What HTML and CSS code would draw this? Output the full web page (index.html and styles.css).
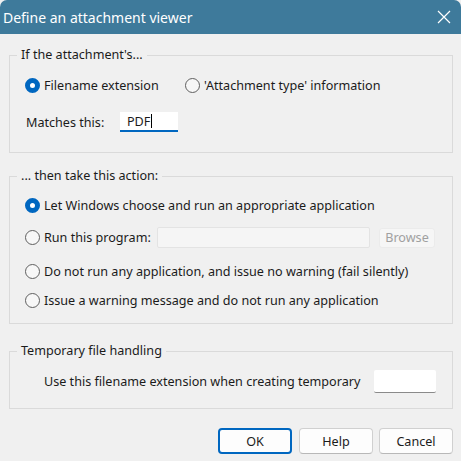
FILE: index.html
```html
<!DOCTYPE html>
<html>
<head>
<meta charset="utf-8">
<link rel="stylesheet" href="styles.css">
</head>
<body>
<div class="window">
  <div class="titlebar">
    <span class="title">Define an attachment viewer</span>
    <svg class="close" width="14" height="14" viewBox="0 0 14 14"><path d="M1 1 L13 13 M13 1 L1 13" stroke="#fff" stroke-width="1.2" fill="none"/></svg>
  </div>
  <div class="content">
    <fieldset class="group g1">
      <legend>If the attachment's...</legend>
      <div class="row r-type">
        <label class="opt w160"><span class="radio on"></span>Filename extension</label>
        <label class="opt"><span class="radio"></span>'Attachment type' information</label>
      </div>
      <div class="row r-match">
        <span class="lbl-match">Matches this:</span>
        <span class="edit edit-pdf">PDF<span class="caret"></span></span>
      </div>
    </fieldset>

    <fieldset class="group g2">
      <legend>... then take this action:</legend>
      <label class="opt a1"><span class="radio on"></span>Let Windows choose and run an appropriate application</label>
      <div class="row a2">
        <label class="opt w132"><span class="radio"></span>Run this program:</label>
        <span class="edit edit-prog"></span>
        <span class="btn-browse">Browse</span>
      </div>
      <label class="opt a3"><span class="radio"></span>Do not run any application, and issue no warning (fail silently)</label>
      <label class="opt a4"><span class="radio"></span>Issue a warning message and do not run any application</label>
    </fieldset>

    <fieldset class="group g3">
      <legend>Temporary file handling</legend>
      <div class="row t1">
        <span class="lbl-temp">Use this filename extension when creating temporary</span>
        <span class="edit edit-temp"></span>
      </div>
    </fieldset>

    <div class="buttons">
      <span class="btn default">OK</span>
      <span class="btn">Help</span>
      <span class="btn">Cancel</span>
    </div>
  </div>
</div>
</body>
</html>
```

FILE: styles.css
```css
html, body {
  margin: 0;
  padding: 0;
  background: #f0f0f0;
}
body {
  font-family: "Noto Sans", "Open Sans", sans-serif;
  font-size: 12.6px;
  color: #1b1b1b;
}
.window {
  width: 461px;
  height: 461px;
  background: #f0f0f0;
  overflow: hidden;
}
.titlebar {
  height: 34px;
  background: #3e7a9b;
  border-radius: 7px 7px 0 0;
  display: flex;
  align-items: center;
  justify-content: space-between;
  padding: 0 10px 0 3px;
  color: #fff;
}
.title {
  font-size: 14px;
  margin-top: 1px;
}
.close { display: block; }
.content {
  padding: 13px 8px 0 9px;
  display: flex;
  flex-direction: column;
}
.group {
  margin: 0;
  border: 1px solid #dadada;
  padding: 0 15px;
  min-width: 0;
}
.group legend {
  padding: 0 4px;
  margin-left: -8px;
  line-height: 16px;
  height: 16px;
}
.row {
  display: flex;
  align-items: center;
}
.opt {
  display: flex;
  align-items: center;
  height: 20px;
  white-space: nowrap;
}
.radio {
  width: 13px;
  height: 13px;
  border: 1px solid #5f5f5f;
  border-radius: 50%;
  background: #f7f7f7;
  margin-right: 4px;
  flex: none;
  box-sizing: content-box;
}
.radio.on {
  width: 5px;
  height: 5px;
  border: 5px solid #0067c0;
  background: #fff;
}
.w160 { width: 160px; }
.w132 { width: 132px; }

.g1 { padding-top: 4px; padding-bottom: 20px; }
.r-type { height: 20px; margin-top: 8px; }
.r-match { height: 20px; margin-top: 17px; padding-left: 1px; }
.lbl-match { width: 94px; }
.edit {
  display: inline-flex;
  align-items: center;
  background: #fff;
  box-sizing: border-box;
}
.edit-pdf {
  width: 58px;
  height: 20px;
  border-bottom: 2px solid #0067c0;
  padding-left: 7px;
}
.caret {
  display: inline-block;
  width: 1px;
  height: 14px;
  background: #000;
  margin-left: 1px;
}

.g2 { margin-top: 15px; padding-top: 3px; padding-bottom: 12px; }
.a1 { margin-top: 7px; height: 22px; }
.a2 { margin-top: 11px; height: 21px; }
.edit-prog {
  width: 213px;
  height: 21px;
  background: #f5f5f5;
  border: 1px solid #e3e3e3;
  border-radius: 2px;
}
.btn-browse {
  margin-left: 9px;
  width: 56px;
  height: 20px;
  background: #f6f6f6;
  border: 1px solid #ebebeb;
  border-radius: 3px;
  color: #a0a0a0;
  display: flex;
  align-items: center;
  justify-content: center;
  box-sizing: border-box;
}
.a3 { margin-top: 12px; height: 22px; }
.a4 { margin-top: 7px; height: 22px; }

.g3 { margin-top: 19px; padding-top: 3px; padding-bottom: 15px; }
.t1 { margin-top: 8px; height: 23px; padding-left: 19px; }
.lbl-temp { width: 330px; }
.edit-temp {
  width: 62px;
  height: 23px;
  border-bottom: 1px solid #8a8a8a;
  border-radius: 2px;
}

.buttons {
  display: flex;
  justify-content: flex-end;
  gap: 6px;
  margin-top: 19px;
}
.btn {
  width: 74px;
  height: 26px;
  box-sizing: border-box;
  border: 1px solid #d0d0d0;
  border-bottom-color: #b8b8b8;
  border-radius: 4px;
  background: #fdfdfd;
  display: flex;
  align-items: center;
  justify-content: center;
}
.btn.default {
  border: 2px solid #0067c0;
  margin-right: 1px;
}
```
